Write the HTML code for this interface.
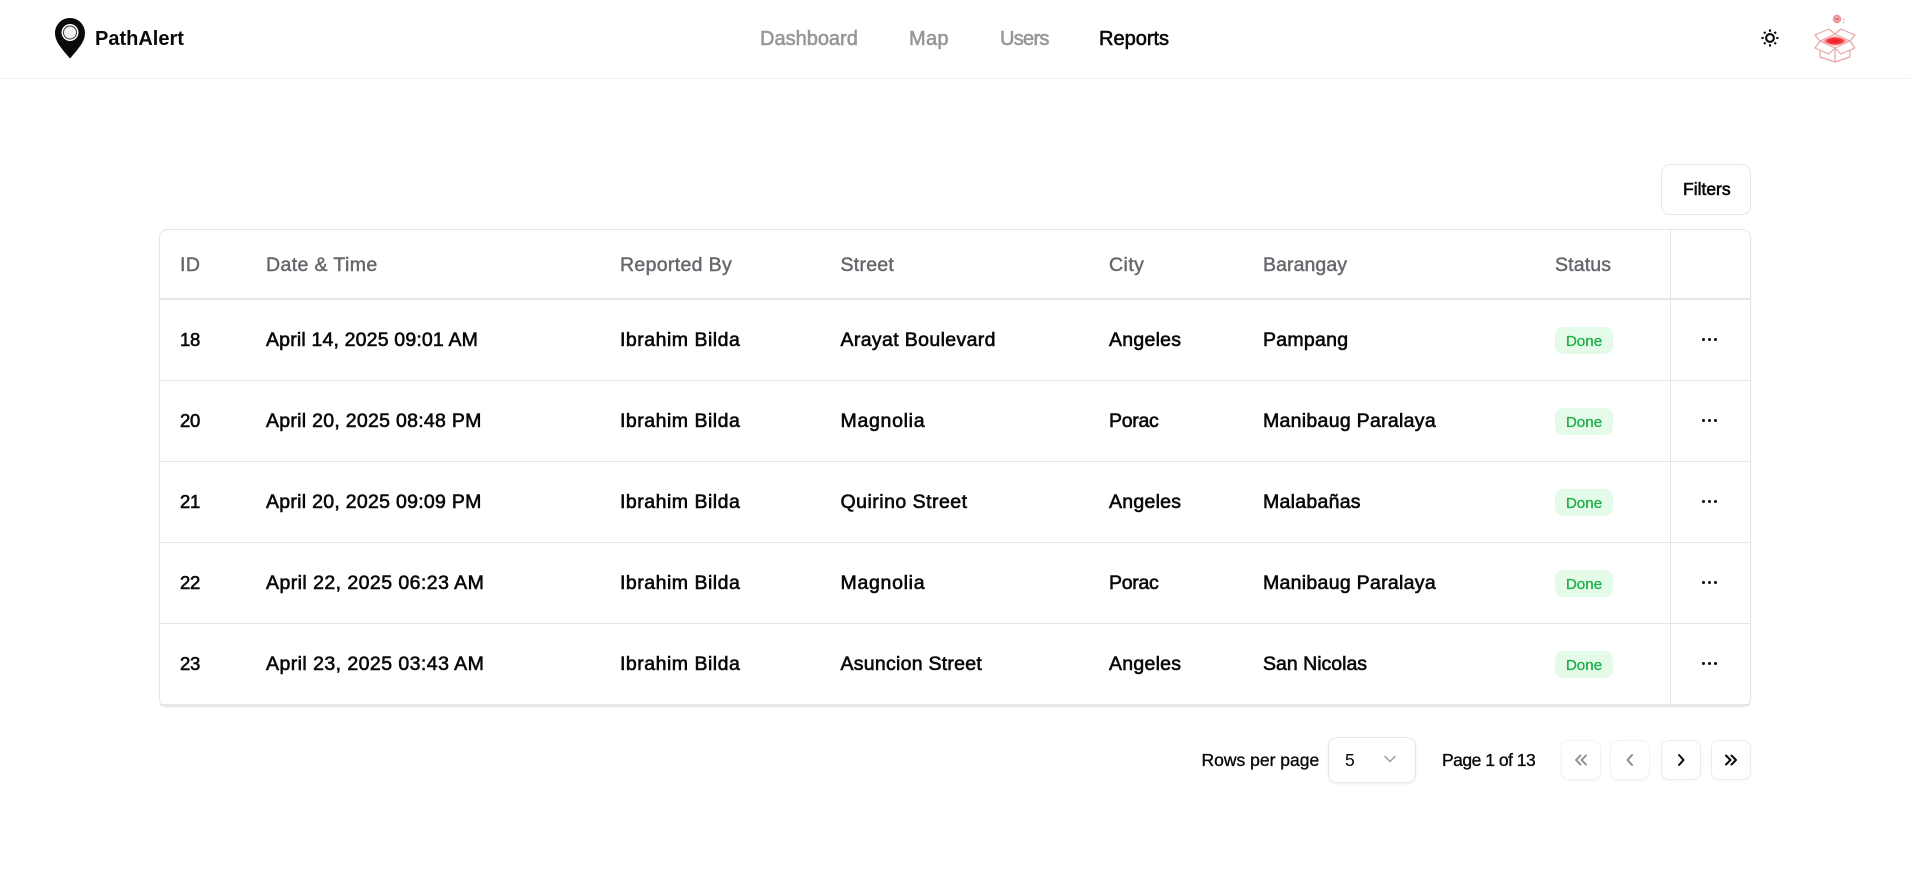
<!DOCTYPE html>
<html lang="en">
<head>
<meta charset="utf-8">
<title>PathAlert Reports</title>
<style>
html,body{margin:0;padding:0;background:#fff;}
body{position:relative;width:1910px;height:872px;overflow:hidden;font-family:"Liberation Sans",sans-serif;color:#09090b;}
.t{position:absolute;white-space:nowrap;line-height:24px;height:24px;font-size:19.5px;-webkit-text-stroke:.6px currentColor;}
.h{color:#66666c;-webkit-text-stroke:.45px currentColor;}
.n{font-size:20px;color:#97979a;-webkit-text-stroke:.6px currentColor;}
.id{font-size:18.5px;letter-spacing:-.3px;}
.line{position:absolute;background:#e6e6e8;}
.badge{position:absolute;left:1555px;width:58px;height:27px;border-radius:8px;background:#e3fbe8;color:#1fae4b;font-size:15.2px;line-height:30px;text-align:center;-webkit-text-stroke:.3px currentColor;}
.dots{position:absolute;left:1702px;width:18px;height:4px;}
.dots i{position:absolute;top:0;width:3.4px;height:3.4px;border-radius:50%;background:#09090b;}
.pg{position:absolute;top:740px;width:38px;height:38px;border:1px solid #ececee;border-radius:8px;background:#fff;box-shadow:0 1px 2px rgba(0,0,0,.04);}
.pg svg{position:absolute;left:9px;top:9px;}
</style>
</head>
<body>
<!-- header -->
<div class="line" style="left:0;top:78px;width:1910px;height:1px;background:#f0f0f1"></div>
<svg style="position:absolute;left:55px;top:18px" width="30" height="41" viewBox="0 0 30 41">
  <path fill="#0a0a0a" d="M15 0C6.700 0 0 6.700 0 15c0 8 5 13 9 18.500l6 7 6-7c4-5.500 9-10.500 9-18.500C30 6.700 23.300 0 15 0Z"/>
  <circle cx="15" cy="14.500" r="8.500" fill="#fff"/>
  <circle cx="15" cy="14.500" r="7" fill="#0a0a0a" opacity=".8"/>
  <circle cx="15" cy="14.500" r="6" fill="#f4f4f4"/>
</svg>
<div class="t" style="left:95px;top:27px;font-size:20px;font-weight:700;-webkit-text-stroke:0">PathAlert</div>

<div class="t n" style="left:760px;top:27px">Dashboard</div>
<div class="t n" style="left:909px;top:27px;letter-spacing:.3px">Map</div>
<div class="t n" style="left:1000px;top:27px;letter-spacing:-.7px">Users</div>
<div class="t n" style="left:1099px;top:27px;color:#09090b">Reports</div>

<svg style="position:absolute;left:1760px;top:28px" width="20" height="20" viewBox="0 0 20 20" fill="none" stroke="#0a0a0a" stroke-width="2.100" stroke-linecap="butt">
  <circle cx="10" cy="10" r="3.900"/>
  <path d="M10 1.500v2.200M10 16.300v2.200M1.500 10h2.200M16.300 10h2.200M4 4l1.500 1.500M14.500 14.500 16 16M4 16l1.500-1.500M14.500 5.500 16 4"/>
</svg>

<svg style="position:absolute;left:1812px;top:14px" width="46" height="50" viewBox="0 0 46 50" fill="none" stroke="#e5a5a8" stroke-width="1.200" stroke-linejoin="round">
  <defs><radialGradient id="g"><stop offset="0" stop-color="#f0141e"/><stop offset=".55" stop-color="#f53a42"/><stop offset="1" stop-color="#fbb" stop-opacity=".2"/></radialGradient></defs>
  <circle cx="25" cy="5" r="3.600" fill="#f2a8ac" stroke="#e89094"/>
  <path d="M23 5h4" stroke="#c33" stroke-width="1"/>
  <path d="M31 5c1.500 1 1 3 0 4" stroke-dasharray="1.500 1.500"/>
  <path d="M8 27 23 20l15 7-15 7Z"/>
  <path d="M8 27 3 21l14-6 6 5 6-5 14 6-5 6M8 27l-5 7 14 6 6-6 6 6 14-6-5-7"/>
  <path d="M8 36v7l15 5 15-5v-7M23 34v14"/>
  <path d="M9 27 23 21.500 37 27 23 32.500Z" fill="url(#g)" stroke="none"/>
</svg>

<!-- filters -->
<div style="position:absolute;left:1661px;top:164px;width:88px;height:49px;border:1px solid #e8e8ea;border-radius:9px;background:#fff"></div>
<div class="t" style="left:1683px;top:177px;font-size:17.500px">Filters</div>

<!-- table -->
<div style="position:absolute;left:159px;top:229px;width:1590px;height:476px;border:1px solid #e6e6e8;border-radius:9px;box-shadow:0 1px 2px rgba(0,0,0,.05)"></div>
<div class="line" style="left:160px;top:298px;width:1590px;height:2px;background:#e5e5e7"></div>
<div class="line" style="left:160px;top:380px;width:1590px;height:1px"></div>
<div class="line" style="left:160px;top:461px;width:1590px;height:1px"></div>
<div class="line" style="left:160px;top:542px;width:1590px;height:1px"></div>
<div class="line" style="left:160px;top:623px;width:1590px;height:1px"></div>
<div class="line" style="left:160px;top:704px;width:1590px;height:2px"></div>
<div class="line" style="left:1670px;top:230px;width:1px;height:475px"></div>

<div class="t h" style="left:180px;top:253px;letter-spacing:.4px">ID</div>
<div class="t h" style="left:266px;top:253px;letter-spacing:.39px">Date &amp; Time</div>
<div class="t h" style="left:620px;top:253px;letter-spacing:.33px">Reported By</div>
<div class="t h" style="left:840.5px;top:253px;letter-spacing:.26px">Street</div>
<div class="t h" style="left:1109px;top:253px;letter-spacing:.45px">City</div>
<div class="t h" style="left:1263px;top:253px;letter-spacing:.08px">Barangay</div>
<div class="t h" style="left:1555px;top:253px;letter-spacing:.15px">Status</div>

<div class="t id" style="left:180px;top:328px">18</div>
<div class="t" style="left:266px;top:328px;letter-spacing:.17px">April 14, 2025 09:01 AM</div>
<div class="t" style="left:620px;top:328px;letter-spacing:.5px">Ibrahim Bilda</div>
<div class="t" style="left:840.5px;top:328px;letter-spacing:.36px">Arayat Boulevard</div>
<div class="t" style="left:1109px;top:328px;letter-spacing:.26px">Angeles</div>
<div class="t" style="left:1263px;top:328px;letter-spacing:.26px">Pampang</div>
<div class="badge" style="top:327px">Done</div>
<div class="dots" style="top:338px"><i style="left:0"></i><i style="left:6px"></i><i style="left:12px"></i></div>

<div class="t id" style="left:180px;top:409px">20</div>
<div class="t" style="left:266px;top:409px;letter-spacing:.28px">April 20, 2025 08:48 PM</div>
<div class="t" style="left:620px;top:409px;letter-spacing:.5px">Ibrahim Bilda</div>
<div class="t" style="left:840.5px;top:409px;letter-spacing:.7px">Magnolia</div>
<div class="t" style="left:1109px;top:409px;letter-spacing:-.3px">Porac</div>
<div class="t" style="left:1263px;top:409px;letter-spacing:.29px">Manibaug Paralaya</div>
<div class="badge" style="top:408px">Done</div>
<div class="dots" style="top:419px"><i style="left:0"></i><i style="left:6px"></i><i style="left:12px"></i></div>

<div class="t id" style="left:180px;top:490px">21</div>
<div class="t" style="left:266px;top:490px;letter-spacing:.28px">April 20, 2025 09:09 PM</div>
<div class="t" style="left:620px;top:490px;letter-spacing:.5px">Ibrahim Bilda</div>
<div class="t" style="left:840.5px;top:490px;letter-spacing:.48px">Quirino Street</div>
<div class="t" style="left:1109px;top:490px;letter-spacing:.26px">Angeles</div>
<div class="t" style="left:1263px;top:490px;letter-spacing:.27px">Malabañas</div>
<div class="badge" style="top:489px">Done</div>
<div class="dots" style="top:500px"><i style="left:0"></i><i style="left:6px"></i><i style="left:12px"></i></div>

<div class="t id" style="left:180px;top:571px">22</div>
<div class="t" style="left:266px;top:571px;letter-spacing:.44px">April 22, 2025 06:23 AM</div>
<div class="t" style="left:620px;top:571px;letter-spacing:.5px">Ibrahim Bilda</div>
<div class="t" style="left:840.5px;top:571px;letter-spacing:.7px">Magnolia</div>
<div class="t" style="left:1109px;top:571px;letter-spacing:-.3px">Porac</div>
<div class="t" style="left:1263px;top:571px;letter-spacing:.29px">Manibaug Paralaya</div>
<div class="badge" style="top:570px">Done</div>
<div class="dots" style="top:581px"><i style="left:0"></i><i style="left:6px"></i><i style="left:12px"></i></div>

<div class="t id" style="left:180px;top:652px">23</div>
<div class="t" style="left:266px;top:652px;letter-spacing:.44px">April 23, 2025 03:43 AM</div>
<div class="t" style="left:620px;top:652px;letter-spacing:.5px">Ibrahim Bilda</div>
<div class="t" style="left:840.5px;top:652px;letter-spacing:.26px">Asuncion Street</div>
<div class="t" style="left:1109px;top:652px;letter-spacing:.26px">Angeles</div>
<div class="t" style="left:1263px;top:652px">San Nicolas</div>
<div class="badge" style="top:651px">Done</div>
<div class="dots" style="top:662px"><i style="left:0"></i><i style="left:6px"></i><i style="left:12px"></i></div>

<!-- pagination -->
<div class="t" style="left:1201.5px;top:748px;font-size:17.500px;-webkit-text-stroke:.35px currentColor">Rows per page</div>
<div style="position:absolute;left:1328px;top:737px;width:86px;height:44px;border:1px solid #e8e8ea;border-radius:9px;background:#fff;box-shadow:0 1px 3px rgba(0,0,0,.08)"></div>
<div class="t" style="left:1345px;top:748px;font-size:17.500px;-webkit-text-stroke:0">5</div>
<svg style="position:absolute;left:1383px;top:754px" width="14" height="10" viewBox="0 0 14 10" fill="none" stroke="#a9a9ad" stroke-width="1.700" stroke-linecap="round" stroke-linejoin="round"><path d="M2 2.500l5 5 5-5"/></svg>
<div class="t" style="left:1442px;top:748px;font-size:17.500px;letter-spacing:-.5px;-webkit-text-stroke:.35px currentColor">Page 1 of 13</div>

<div class="pg" style="left:1561px;border-color:#f3f3f4"><svg width="20" height="20" viewBox="0 0 20 20" fill="none" stroke="#8b8b90" stroke-width="1.900" stroke-linecap="round" stroke-linejoin="round"><path d="M9.500 5.500 5 10l4.500 4.500M15 5.500 10.500 10l4.500 4.500"/></svg></div>
<div class="pg" style="left:1610px;border-color:#f3f3f4"><svg width="20" height="20" viewBox="0 0 20 20" fill="none" stroke="#8b8b90" stroke-width="1.900" stroke-linecap="round" stroke-linejoin="round"><path d="M12 5 7.500 10l4.500 5"/></svg></div>
<div class="pg" style="left:1661px"><svg width="20" height="20" viewBox="0 0 20 20" fill="none" stroke="#09090b" stroke-width="2" stroke-linecap="round" stroke-linejoin="round"><path d="M8 5l4.500 5L8 15"/></svg></div>
<div class="pg" style="left:1711px"><svg width="20" height="20" viewBox="0 0 20 20" fill="none" stroke="#09090b" stroke-width="2" stroke-linecap="round" stroke-linejoin="round"><path d="M5 5.500 9.500 10 5 14.500M10.500 5.500 15 10l-4.500 4.500"/></svg></div>
</body>
</html>
